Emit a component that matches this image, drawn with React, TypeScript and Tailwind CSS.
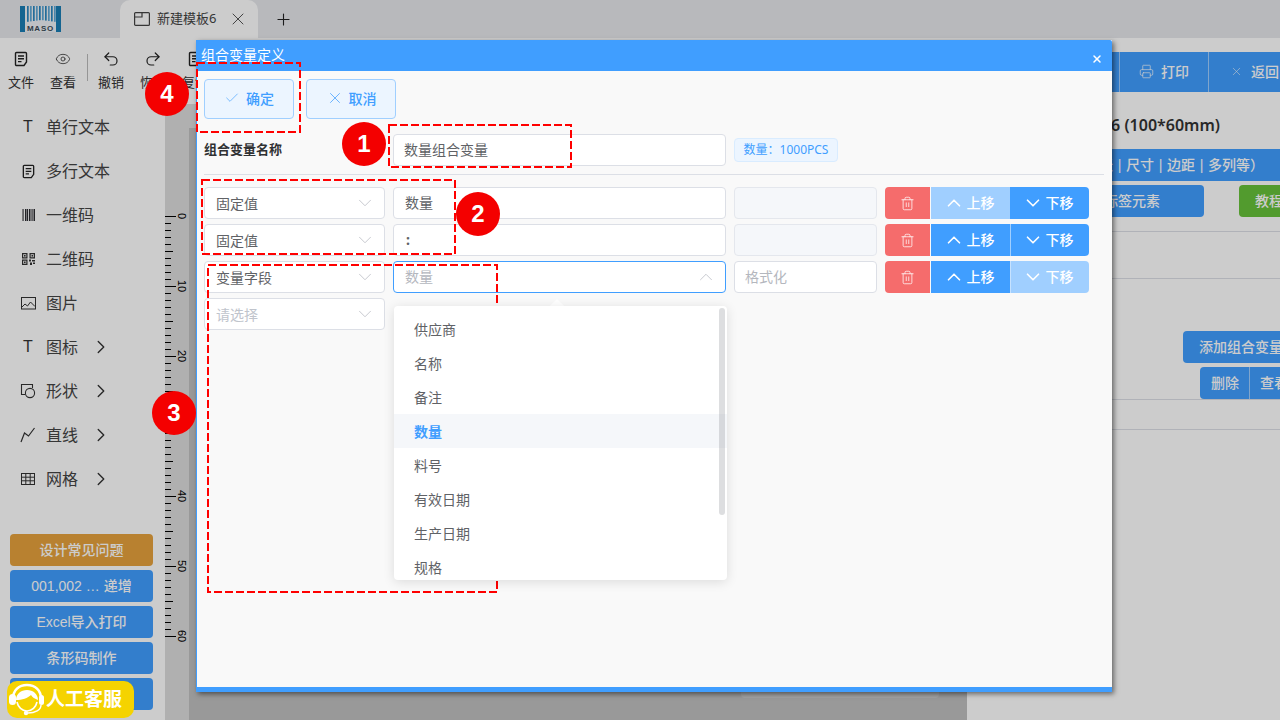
import React from "react";
import { Eye, Undo2, Redo2, Printer, X, Check, ChevronDown, ChevronUp, ChevronRight, Trash2, Plus } from "lucide-react";

const FileIcon = ({ size = 16 }: { size?: number }) => (
  <svg width={size} height={size} viewBox="0 0 16 16" fill="none" stroke="#222" strokeWidth="1.4">
    <path d="M11 14.500H3.500a1 1 0 0 1-1-1v-11a1 1 0 0 1 1-1h9a1 1 0 0 1 1 1V11l-2.500 3.500z" />
    <path d="M5 5h6M5 7.800h6M5 10.600h3.500" />
  </svg>
);
const ShapeIcon = () => (
  <svg width="16" height="16" viewBox="0 0 16 16" fill="none" stroke="#333" strokeWidth="1.1">
    <path d="M5 11.500H1.500v-10h11V5" />
    <circle cx="10" cy="10" r="4.600" />
  </svg>
);
const LineIcon = () => (
  <svg width="16" height="16" viewBox="0 0 16 16" fill="none" stroke="#333" strokeWidth="1.2">
    <path d="M1 15L4.500 6l4 3L14.500 1" />
  </svg>
);
const BarcodeIcon = () => (
  <svg width="13" height="12" viewBox="0 0 13 12">
    {[0.500, 3, 5, 7, 9.500, 11.500].map((x, i) => (
      <rect key={x} x={x} y="0" width={i % 2 ? 1.500 : 1.100} height="12" fill="#2d2d33" />
    ))}
  </svg>
);
const QrIcon = () => (
  <svg width="13" height="12" viewBox="0 0 13 12" fill="#333">
    <path fillRule="evenodd" d="M0 0h5.500v5.500H0zM1.200 1.200v3.100h3.100V1.200zM7.500 0H13v5.500H7.500zM8.700 1.200v3.100h3.100V1.200zM0 6.500h5.500V12H0zM1.200 7.700v3.100h3.100V7.700z" />
    <rect x="2" y="2" width="1.600" height="1.600" />
    <rect x="9.500" y="2" width="1.600" height="1.600" />
    <rect x="2" y="8.500" width="1.600" height="1.600" />
    <path d="M7 6.500h2v2H7zM10 7h3v1.500h-3zM8 9.500h2V12H8zM11 9.500h2v1.500h-2z" />
  </svg>
);
const PicIcon = () => (
  <svg width="15" height="13" viewBox="0 0 15 13" fill="none" stroke="#333" strokeWidth="1">
    <rect x="0.500" y="0.500" width="14" height="11.500" />
    <path d="M1 10l3-3 2.500 2 3-4L14 9.500" />
  </svg>
);
const GridIcon = () => (
  <svg width="14" height="12" viewBox="0 0 14 12" fill="none" stroke="#333" strokeWidth="1">
    <rect x="0.500" y="0.500" width="13" height="11" />
    <path d="M0.500 4.200h13M0.500 7.800h13M4.800 0.500v11M9.200 0.500v11" />
  </svg>
);
const TIcon = () => <span className="w-4 text-center font-['Liberation_Sans',sans-serif] text-[16px] leading-none text-[#333]">T</span>;

const sideItems: { icon: React.ReactNode; label: string; arrow?: boolean }[] = [
  { icon: <TIcon />, label: "单行文本" },
  { icon: <FileIcon size={15} />, label: "多行文本" },
  { icon: <BarcodeIcon />, label: "一维码" },
  { icon: <QrIcon />, label: "二维码" },
  { icon: <PicIcon />, label: "图片" },
  { icon: <TIcon />, label: "图标", arrow: true },
  { icon: <ShapeIcon />, label: "形状", arrow: true },
  { icon: <LineIcon />, label: "直线", arrow: true },
  { icon: <GridIcon />, label: "网格", arrow: true },
];

const ToolItem = ({ icon, label }: { icon: React.ReactNode; label: string }) => (
  <div className="flex w-[42px] flex-col items-center gap-[6px] text-[13px] leading-[18px] text-[#333]">
    <div className="flex h-[16px] items-center">{icon}</div>
    <span>{label}</span>
  </div>
);

const Ruler = () => {
  const ticks = Array.from({ length: 61 }, (_, i) => i);
  return (
    <svg width="24" height="592" viewBox="0 0 24 592" className="block">
      {ticks.map((i) => {
        const y = 88 + i * 7 + 0.5;
        const len = i % 10 === 0 ? 11 : i % 5 === 0 ? 8 : 6;
        return <line key={i} x1="0" x2={len} y1={y} y2={y} stroke="#000" strokeWidth="1" />;
      })}
      {[0, 10, 20, 30, 40, 50, 60].map((n) => (
        <text key={n} x="0" y="0" fontSize="11" fontFamily="Liberation Sans, sans-serif" fill="#000" textAnchor="middle" transform={`translate(13 ${88 + n * 7}) rotate(90)`}>
          {n}
        </text>
      ))}
    </svg>
  );
};

const Selector = ({ text, placeholder }: { text: string; placeholder?: boolean }) => (
  <div className="flex h-[32px] w-[181px] shrink-0 items-center justify-between rounded border border-[#dcdfe6] bg-white pl-[11px] pr-[8px]">
    <span className={`text-[14px] ${placeholder ? "text-[#c0c4cc]" : "text-[#606266]"}`}>{text}</span>
    <ChevronDown size={22} strokeWidth={0.8} color="#b4b7be" />
  </div>
);

const ActionGroup = ({ upOff, downOff }: { upOff?: boolean; downOff?: boolean }) => (
  <div className="flex h-[32px] shrink-0 text-[14px] font-medium text-white">
    <div className="flex w-[45px] items-center justify-center rounded-l bg-[#f56c6c]">
      <Trash2 size={15} strokeWidth={1.200} />
    </div>
    <div className={`ml-[1px] flex w-[79px] items-center justify-center gap-[2px] pb-[1px] pr-[4px] ${upOff ? "bg-[#a0cfff]" : "bg-[#409eff]"}`}>
      <ChevronUp size={22} strokeWidth={1.800} />
      <span className="pb-[1px]">上移</span>
    </div>
    <div className={`flex w-[79px] items-center justify-center gap-[2px] rounded-r border-l pb-[1px] pr-[5px] ${downOff ? "border-[#c6e2ff] bg-[#a0cfff]" : upOff ? "border-[#409eff] bg-[#409eff]" : "border-[#a0cfff] bg-[#409eff]"}`}>
      <ChevronDown size={22} strokeWidth={1.800} />
      <span className="pb-[1px]">下移</span>
    </div>
  </div>
);

const Badge = ({ n, cls }: { n: string; cls: string }) => (
  <div className={`absolute flex h-[44px] w-[44px] items-center justify-center rounded-full bg-[#f40000] font-['Liberation_Sans',sans-serif] text-[24px] font-bold text-white ${cls}`}>
    {n}
  </div>
);

const Dashed = ({ x, y, w, h }: { x: number; y: number; w: number; h: number }) => (
  <svg className="pointer-events-none absolute" style={{ left: x, top: y }} width={w} height={h}>
    <rect x="1" y="1" width={w - 2} height={h - 2} fill="none" stroke="#f00" strokeWidth="2" strokeDasharray="8 3" />
  </svg>
);

const options = ["供应商", "名称", "备注", "数量", "料号", "有效日期", "生产日期", "规格"];

export default function App() {
  return (
    <div className="relative flex h-[720px] w-[1280px] flex-col overflow-hidden bg-white font-['Noto_Sans','Noto_Sans_CJK_SC',sans-serif] text-[#333]">
      {/* tab bar */}
      <div className="flex h-[38px] shrink-0 items-center bg-[#e6e8ec]">
        <div className="ml-[20px] w-[41px]">
          <svg width="41" height="26" viewBox="0 0 41 26" className="block">
            <rect width="41" height="26" fill="#eef2f5" />
            <rect x="0" width="5" height="26" fill="#1a7db5" />
            <rect x="36" width="5" height="26" fill="#1a7db5" />
            {[7, 10, 13, 16, 19, 22, 25, 28, 31, 34].map((x, i) => (
              <rect key={x} x={x} y="0" width="1.700" height={14 + Math.abs(i - 4.500) * 0.4} fill={i % 2 ? "#5fa8d6" : "#2c88c0"} />
            ))}
            <text x="20.500" y="24.500" fontSize="8" fontWeight="700" textAnchor="middle" fill="#3a4a55" fontFamily="Liberation Sans, sans-serif" letterSpacing="0.8">MASO</text>
          </svg>
        </div>
        <div className="ml-[59px] flex h-[38px] w-[138px] items-center rounded-t-[10px] bg-white pl-[14px] text-[13px] text-[#444]">
          <svg width="16" height="14" viewBox="0 0 16 14" fill="none" stroke="#444" strokeWidth="1.200">
            <rect x="0.600" y="0.600" width="14.800" height="12.800" rx="1" />
            <path d="M0.600 5h7.400V0.600" />
          </svg>
          <span className="ml-[7px]">新建模板6</span>
          <X size={20} strokeWidth={1.200} className="ml-[12px]" color="#555" />
        </div>
        <Plus size={19} strokeWidth={1.400} className="ml-[16px]" color="#222" />
      </div>

      {/* body */}
      <div className="flex min-h-0 flex-1">
        <div className="flex w-[967px] shrink-0 flex-col">
          <div className="flex h-[66px] shrink-0 items-start pt-[13px]">
            <ToolItem icon={<FileIcon />} label="文件" />
            <ToolItem icon={<Eye size={16} strokeWidth={1.200} color="#333" />} label="查看" />
            <div className="ml-[3px] mr-[2px] mt-[3px] h-[27px] w-px bg-[#bbb]" />
            <ToolItem icon={<Undo2 size={18} strokeWidth={1.600} color="#222" />} label="撤销" />
            <ToolItem icon={<Redo2 size={18} strokeWidth={1.600} color="#222" />} label="恢复" />
            <ToolItem icon={<FileIcon />} label="复制" />
          </div>
          <div className="flex min-h-0 flex-1">
            <div className="flex w-[165px] shrink-0 flex-col pt-[1px]">
              <div className="flex flex-col pl-[20px]">
                {sideItems.map((s) => (
                  <div key={s.label} className="flex h-[44px] items-center text-[16px] text-[#444]">
                    <div className="flex w-[16px] justify-center">{s.icon}</div>
                    <span className="ml-[10px] w-[44px] whitespace-nowrap">{s.label}</span>
                    {s.arrow && <ChevronRight size={22} strokeWidth={1.500} color="#333" />}
                  </div>
                ))}
              </div>
              <div className="mt-[33px] flex flex-col gap-[4px] pl-[10px] font-['Liberation_Sans','Noto_Sans_CJK_SC',sans-serif] text-[14px] font-medium text-white">
                <div className="flex h-[32px] w-[143px] items-center justify-center rounded bg-[#e6a23c]">设计常见问题</div>
                <div className="flex h-[32px] w-[143px] items-center justify-center rounded bg-[#409eff]">001,002 … 递增</div>
                <div className="flex h-[32px] w-[143px] items-center justify-center rounded bg-[#409eff]">Excel导入打印</div>
                <div className="flex h-[32px] w-[143px] items-center justify-center rounded bg-[#409eff]">条形码制作</div>
                <div className="flex h-[32px] w-[143px] shrink-0 items-center justify-center rounded bg-[#409eff]" />
              </div>
            </div>
            <div className="flex min-w-0 flex-1 flex-col bg-[#dcdcdc]">
              <div className="h-[24px] shrink-0" />
              <div className="flex min-h-0 flex-1">
                <div className="w-[24px] shrink-0"><Ruler /></div>
                <div className="flex flex-1 items-end justify-end bg-[#c0c0c0] pr-[28px]">
                  <div className="mb-[22px] h-[6px] w-[198px] rounded-b bg-[#cccccc]" />
                </div>
              </div>
            </div>
          </div>
        </div>

        {/* right panel */}
        <div className="flex min-w-0 flex-1 flex-col overflow-hidden pt-[14px] text-[14px] font-medium text-white">
          <div className="flex h-[40px] shrink-0 justify-end whitespace-nowrap bg-[#409eff]">
            <div className="flex w-[90px] items-center justify-center gap-[7px] border-x border-[#a0cfff] pb-[1px]">
              <Printer size={15} strokeWidth={1.100} />
              <span>打印</span>
            </div>
            <div className="flex w-[71px] shrink-0 items-center gap-[8px] pb-[1px] pl-[21px]">
              <X size={13} strokeWidth={1} />
              <span>返回</span>
            </div>
          </div>
          <div className="mt-[22px] flex h-[22px] shrink-0 justify-end pr-[60px] text-[16px] font-semibold leading-[22px] text-[#333]">6 (100*60mm)</div>
          <div className="mt-[13px] flex h-[32px] shrink-0 items-center justify-end whitespace-nowrap bg-[#409eff] pb-[2px] pr-[16px] [word-spacing:-1px]">（纸张 | 尺寸 | 边距 | 多列等）</div>
          <div className="mt-[4px] flex h-[32px] shrink-0 gap-[35px]">
            <div className="flex w-[237px] shrink-0 items-center justify-end rounded bg-[#409eff] pb-[2px] pr-[44px]">添加标签元素</div>
            <div className="flex w-[41px] shrink-0 items-center justify-start overflow-hidden whitespace-nowrap rounded-l bg-[#67c23a] pb-[2px] pl-[16px]">教程</div>
          </div>
          <div className="mt-[14px] h-[48px] shrink-0 border-y border-[#dcdfe6]" />
          <div className="flex h-[121px] shrink-0 flex-col items-end justify-end gap-[4px] whitespace-nowrap border-b border-[#dcdfe6]">
            <div className="flex h-[32px] w-[97px] items-center overflow-hidden rounded-l bg-[#409eff] pb-[2px] pl-[16px]">添加组合变量</div>
            <div className="flex h-[32px] w-[80px] items-center overflow-hidden rounded-l bg-[#409eff]">
              <span className="flex h-full w-[50px] shrink-0 items-center justify-center border-r border-[#a0cfff] pb-[2px] pl-[1px]">删除</span>
              <span className="shrink-0 pb-[2px] pl-[10px]">查看</span>
            </div>
          </div>
          <div className="h-[30px] shrink-0 border-b border-[#dcdfe6]" />
        </div>
      </div>

      {/* help chip & overlay */}
      <div className="absolute inset-0 bg-black/20" />
      <div className="absolute left-[7px] top-[681px] flex h-[37px] w-[127px] items-center rounded-[10px] bg-[#f5d300]">
        <svg width="38" height="33" viewBox="0 0 38 33" fill="none" className="ml-[1px] shrink-0">
          <path d="M5 16C5 7 11 2 19 2s14 5 14 14" stroke="#fff" strokeWidth="2.600" />
          <rect x="1" y="11" width="7" height="11" rx="3.500" fill="#fff" />
          <rect x="31" y="12" width="5" height="10" rx="2.500" fill="#fff" />
          <path d="M8 17c0-6 5-10 11-10s11 4 11 10c-3-1-6-3-7-5-3 3-9 5-15 5z" fill="#fff" />
          <path d="M9 19c1 5 5 9 10 9s9-4 10-9" stroke="#fff" strokeWidth="1.600" />
          <path d="M33 22c0 5-6 8-13 8" stroke="#fff" strokeWidth="1.400" />
          <circle cx="18" cy="30" r="2.200" fill="#fff" />
        </svg>
        <span className="text-[19px] font-bold leading-none text-white">人工客服</span>
      </div>

      {/* dialog */}
      <div className="absolute left-[196px] top-[40px] flex h-[652px] w-[916px] flex-col border-b-[5px] border-l border-b-[#409eff] border-l-[#409eff] bg-[#f9f9f9] shadow-[2px_2px_5px_rgba(0,0,0,0.5)]">
        <div className="-ml-px flex h-[31px] shrink-0 items-start justify-between rounded-tr-[2px] bg-[#409eff] pl-[5px] pr-[9px] pt-[5px] text-[14px] leading-[20px] text-white">
          <span>组合变量定义</span>
          <X size={12} strokeWidth={3} className="mt-[8px]" />
        </div>
        <div className="flex flex-1 flex-col px-[7px]">
          <div className="mt-[8px] flex gap-[12px] text-[14px] font-medium text-[#409eff]">
            <div className="flex h-[40px] w-[90px] items-center justify-center gap-[6px] rounded border border-[#a0cfff] bg-[#ecf5ff] pb-[2px]">
              <Check size={16} strokeWidth={1} />
              <span>确定</span>
            </div>
            <div className="flex h-[40px] w-[90px] items-center justify-center gap-[5px] rounded border border-[#a0cfff] bg-[#ecf5ff] pb-[2px]">
              <X size={18} strokeWidth={1} />
              <span>取消</span>
            </div>
          </div>
          <div className="mt-[15px] flex h-[32px] items-center">
            <span className="w-[189px] shrink-0 text-[13px] font-bold text-[#303133]">组合变量名称</span>
            <div className="flex h-[32px] w-[333px] shrink-0 items-center rounded border border-[#dcdfe6] bg-white pb-[2px] pl-[10px] text-[14px] text-[#606266]">数量组合变量</div>
            <div className="ml-[8px] flex h-[24px] w-[104px] items-center justify-center rounded border border-[#d9ecff] bg-[#ecf5ff] text-[12px] text-[#409eff]">数量：1000PCS</div>
          </div>
          <div className="mr-[1px] mt-[8px] h-px bg-[#dcdfe6]" />
          <div className="mt-[12px] flex flex-col gap-[5px]">
            <div className="flex gap-[8px]">
              <Selector text="固定值" />
              <div className="flex h-[32px] w-[333px] shrink-0 items-center rounded border border-[#dcdfe6] bg-white pb-[2px] pl-[11px] text-[14px] text-[#606266]">数量</div>
              <div className="h-[32px] w-[143px] shrink-0 rounded border border-[#e4e7ed] bg-[#f5f7fa]" />
              <ActionGroup upOff />
            </div>
            <div className="flex gap-[8px]">
              <Selector text="固定值" />
              <div className="flex h-[32px] w-[333px] shrink-0 items-center rounded border border-[#dcdfe6] bg-white pb-[2px] pl-[12px] text-[14px] font-bold text-[#606266]">:</div>
              <div className="h-[32px] w-[143px] shrink-0 rounded border border-[#e4e7ed] bg-[#f5f7fa]" />
              <ActionGroup />
            </div>
            <div className="flex gap-[8px]">
              <Selector text="变量字段" />
              <div className="relative flex h-[32px] w-[333px] shrink-0 items-center justify-between rounded border border-[#409eff] bg-white pl-[11px] pr-[8px] text-[14px] text-[#b4b7be]">
                <span className="pb-[2px]">数量</span>
                <ChevronUp size={22} strokeWidth={0.8} color="#b4b7be" />
                <div className="absolute left-0 top-[44px] z-10 w-[333px]">
                  <div className="absolute left-[158px] top-[-5px] h-[10px] w-[10px] rotate-45 bg-white" />
                  <div className="relative h-[274px] overflow-hidden rounded bg-white pt-[6px] text-[14px] text-[#606266] shadow-[0_2px_12px_rgba(0,0,0,0.12)]">
                    {options.map((o) => (
                      <div key={o} className={`flex h-[34px] items-center pl-[20px] ${o === "数量" ? "bg-[#f5f7fa] font-bold text-[#409eff]" : ""}`}>{o}</div>
                    ))}
                    <div className="absolute right-[2px] top-[2px] h-[207px] w-[6px] rounded-full bg-[#909399]/30" />
                  </div>
                </div>
              </div>
              <div className="flex h-[32px] w-[143px] shrink-0 items-center rounded border border-[#dcdfe6] bg-white pb-[2px] pl-[10px] text-[14px] text-[#b4b7be]">格式化</div>
              <ActionGroup downOff />
            </div>
            <div className="flex gap-[8px]">
              <Selector text="请选择" placeholder />
            </div>
          </div>
        </div>
      </div>

      {/* annotations */}
      <Dashed x={196} y={62} w={105} h={71} />
      <Dashed x={388} y={124} w={184} h={44} />
      <Dashed x={201} y={179} w={255} h={76} />
      <Dashed x={207} y={264} w={291} h={329} />
      <Badge n="1" cls="left-[342px] top-[122px]" />
      <Badge n="2" cls="left-[456px] top-[192px]" />
      <Badge n="3" cls="left-[152px] top-[391px]" />
      <Badge n="4" cls="left-[145px] top-[72px]" />
    </div>
  );
}
